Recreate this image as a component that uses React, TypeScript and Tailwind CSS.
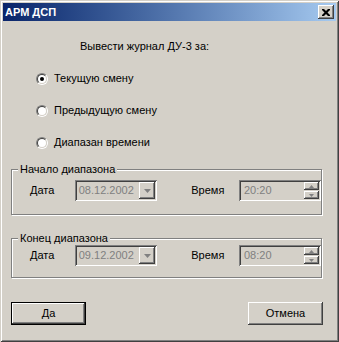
import React, { useState } from "react";

const raised =
  "bg-[#d4d0c8] shadow-[inset_-1px_-1px_0_#404040,inset_1px_1px_0_#fff,inset_-2px_-2px_0_#808080]";
const sunken =
  "shadow-[inset_1px_1px_0_#808080,inset_-1px_-1px_0_#fff,inset_2px_2px_0_#404040,inset_-2px_-2px_0_#d4d0c8]";

const Radio: React.FC<{ label: string; checked: boolean; onClick: () => void }> = ({
  label,
  checked,
  onClick,
}) => (
  <div className="ml-[33px] flex h-[13px] items-center gap-[6px]" onClick={onClick}>
    <div className="flex h-[12px] w-[12px] items-center justify-center rounded-full border border-b-white border-l-[#808080] border-r-white border-t-[#808080]">
      <div className="flex h-[10px] w-[10px] items-center justify-center rounded-full border border-b-[#d4d0c8] border-l-[#404040] border-r-[#d4d0c8] border-t-[#404040] bg-white">
        {checked && <div className="h-[4px] w-[4px] rounded-full bg-black" />}
      </div>
    </div>
    <span className="leading-[13px]">{label}</span>
  </div>
);

const Arrow: React.FC<{ up?: boolean; small?: boolean }> = ({ up, small }) => (
  <svg width={small ? 5 : 7} height={small ? 3 : 4} viewBox={small ? "0 0 5 3" : "0 0 7 4"}>
    <path
      d={small ? (up ? "M2.5 0 L5 3 L0 3Z" : "M0 0 L5 0 L2.5 3Z") : "M0 0 L7 0 L3.5 4Z"}
      fill="#808080"
    />
  </svg>
);

const RangeRow: React.FC<{ date: string; time: string }> = ({ date, time }) => (
  <div className="flex items-center">
    <span className="w-[45px] pl-[0px]">Дата</span>
    <div className={`flex h-[21px] w-[83px] items-center justify-between p-[2px] ${sunken}`}>
      <span className="pl-[2px] text-[#808080]">{date}</span>
      <div className={`flex h-[17px] w-[16px] items-center justify-center ${raised}`}>
        <Arrow />
      </div>
    </div>
    <span className="ml-[34px] w-[48px]">Время</span>
    <div className={`flex h-[21px] w-[82px] shrink-0 items-center justify-between p-[2px] ${sunken}`}>
      <span className="pl-[3px] text-[#808080]">{time}</span>
      <div className="flex flex-col gap-[1px]">
        <div className={`flex h-[8px] w-[15px] items-center justify-center ${raised}`}>
          <Arrow up small />
        </div>
        <div className={`flex h-[8px] w-[15px] items-center justify-center ${raised}`}>
          <Arrow small />
        </div>
      </div>
    </div>
  </div>
);

const Group: React.FC<{ title: string; className: string; children: React.ReactNode }> = ({
  title,
  className,
  children,
}) => (
  <div
    className={`relative ml-[8px] w-[311px] border border-[#808080] pl-[18px] shadow-[1px_1px_0_#fff,inset_1px_1px_0_#fff] ${className}`}
  >
    <span className="absolute left-[6px] top-[-7px] bg-[#d4d0c8] px-[2px] leading-[13px]">{title}</span>
    {children}
  </div>
);

const App: React.FC = () => {
  const [mode, setMode] = useState(0);

  return (
    <div className="relative h-[342px] w-[339px] overflow-hidden bg-[#d4d0c8] p-[3px] font-['Liberation_Sans',Arial,sans-serif] text-[11px] text-black shadow-[inset_1px_1px_0_#d4d0c8,inset_-1px_-1px_0_#404040,inset_2px_2px_0_#fff,inset_-2px_-2px_0_#808080]">
      <div className="flex h-[18px] items-center justify-between bg-linear-to-r from-[#0a246a] to-[#a6caf0] pl-[2px] pr-[2px]">
        <span className="text-[11px] font-bold text-white">АРМ ДСП</span>
        <div className={`flex h-[14px] w-[16px] items-center justify-center ${raised}`}>
          <svg width="8" height="7" viewBox="0 0 8 7">
            <path d="M0 0h2l2 2 2-2h2v1L5.5 3.5 8 6v1H6L4 5 2 7H0V6l2.5-2.5L0 1Z" fill="#000" />
          </svg>
        </div>
      </div>

      <div className="ml-[77px] mt-[19px] leading-[13px]">Вывести журнал ДУ-3 за:</div>

      <div className="mt-[19px] flex flex-col gap-[19px]">
        <Radio label="Текущую смену" checked={mode === 0} onClick={() => setMode(0)} />
        <Radio label="Предыдущую смену" checked={mode === 1} onClick={() => setMode(1)} />
        <Radio label="Диапазан времени" checked={mode === 2} onClick={() => setMode(2)} />
      </div>

      <Group title="Начало диапазона" className="mt-[20px] h-[46px] pt-[10px]">
        <RangeRow date="08.12.2002" time="20:20" />
      </Group>

      <Group title="Конец диапазона" className="mt-[23px] h-[40px] pt-[6px]">
        <RangeRow date="09.12.2002" time="08:20" />
      </Group>

      <div className="ml-[8px] mt-[24px] flex w-[312px] justify-between">
        <button className="h-[23px] w-[75px] border border-black p-0">
          <div className={`flex h-full w-full items-center justify-center ${raised}`}>Да</div>
        </button>
        <button className={`h-[23px] w-[75px] ${raised}`}>Отмена</button>
      </div>
    </div>
  );
};

export default App;
